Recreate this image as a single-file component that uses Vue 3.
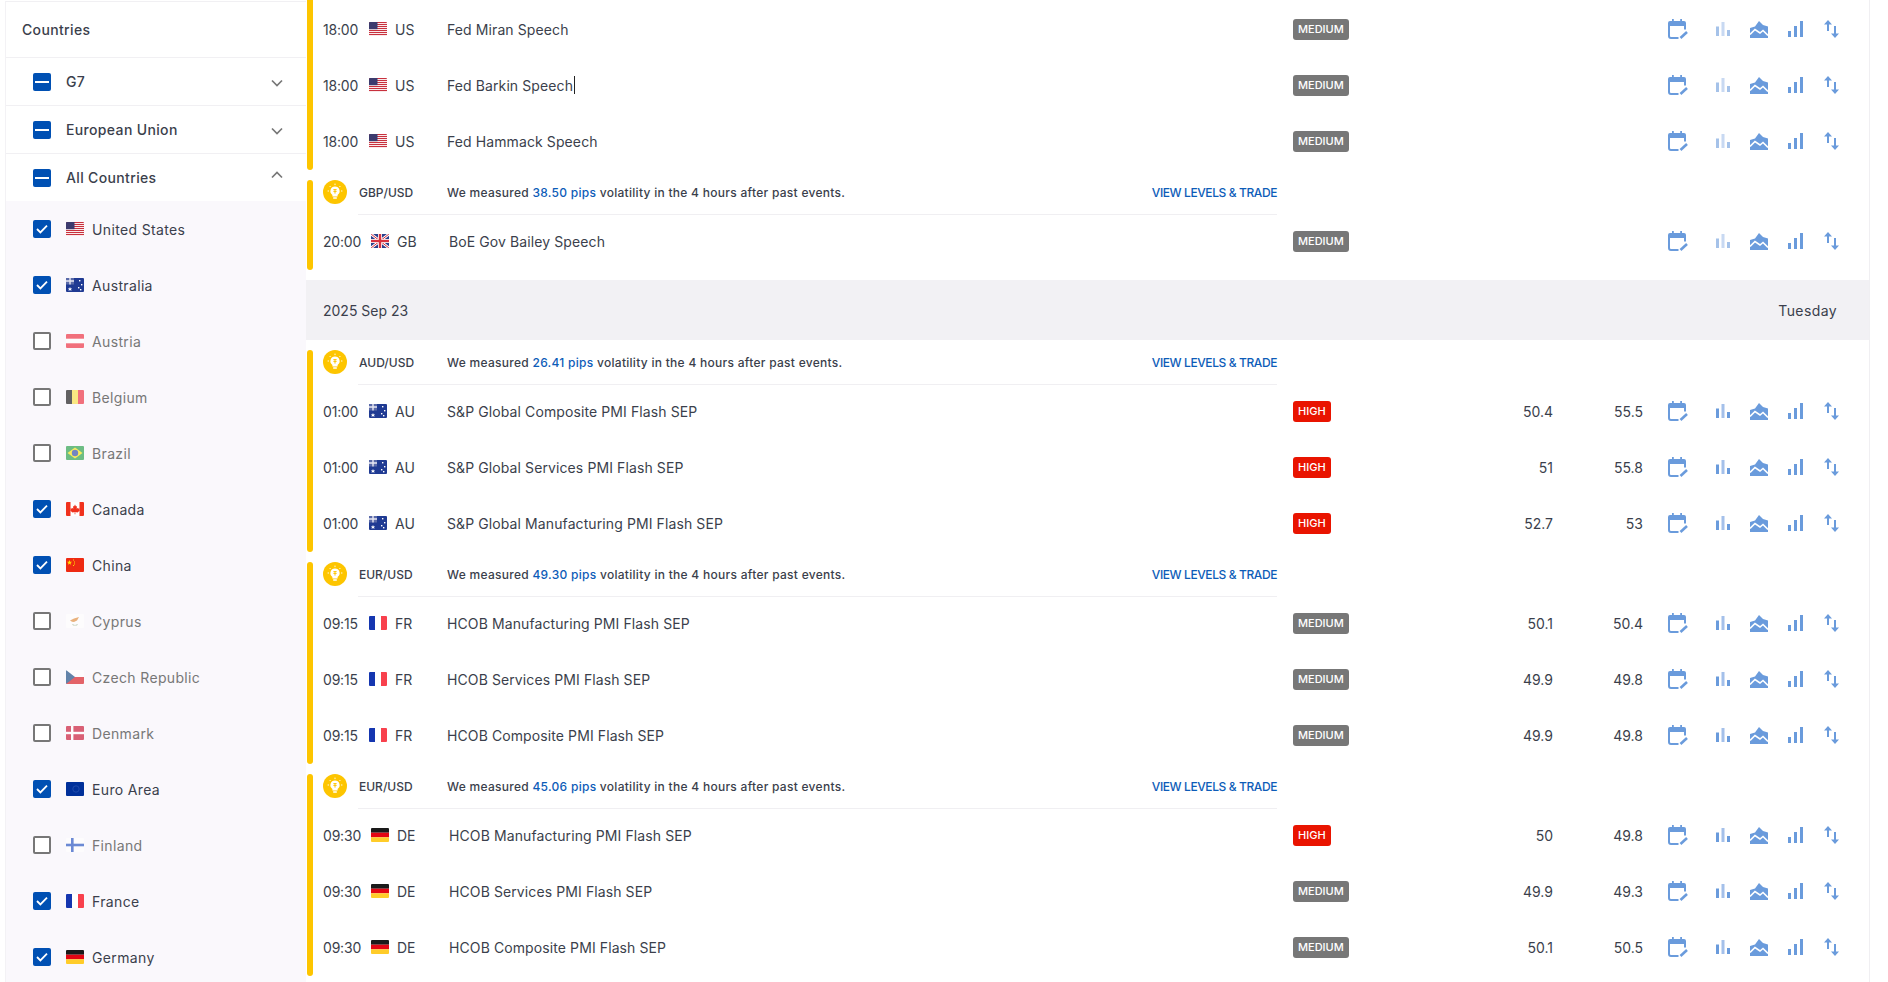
<script setup>
import { h } from 'vue'

const r = (x, y, width, height, fill) => h('rect', { x, y, width, height, fill })
const p = (d, fill, extra = {}) => h('path', { d, fill, ...extra })
const flagShapes = {
  US: () => [r(0, 0, 18, 14, '#fff'), ...[0, 2, 4, 6, 8, 10, 12].map((y) => r(0, y, 18, 1.1, '#c8313e')), r(0, 0, 8.5, 7.2, '#3c3b6e')],
  AU: () => [r(0, 0, 18, 14, '#1f3a93'), r(0, 0, 8, 6.5, '#5a6aa8'), p('M0 3h8M4 0v6.5', 'none', { stroke: '#e8e8f2', 'stroke-width': 1.4 }), p('M4 9l.7 1.5h1.5l-1.2 1 .5 1.5-1.5-.9-1.5.9.5-1.5-1.2-1h1.5z', '#fff'), r(13, 2, 1.4, 1.4, '#fff'), r(15, 6, 1.4, 1.4, '#fff'), r(12, 9, 1.4, 1.4, '#fff'), r(14, 11, 1.4, 1.4, '#fff')],
  AT: () => [r(0, 0, 18, 14, '#fff'), r(0, 0, 18, 4.7, '#ed2939'), r(0, 9.3, 18, 4.7, '#ed2939')],
  BE: () => [r(0, 0, 6, 14, '#111'), r(6, 0, 6, 14, '#fae042'), r(12, 0, 6, 14, '#ed2939')],
  BR: () => [r(0, 0, 18, 14, '#229e45'), p('M9 1.5L16.5 7 9 12.5 1.5 7z', '#f8e509'), h('circle', { cx: 9, cy: 7, r: 3.2, fill: '#2b49a3' })],
  CA: () => [r(0, 0, 18, 14, '#fff'), r(0, 0, 4.5, 14, '#f0311d'), r(13.5, 0, 4.5, 14, '#f0311d'), p('M9 2.5l1 2 1-.4-.3 2.6 1.4-1 .4 1 1.3-.2-.5 1.6.6.5-2.4 1.8-2.2-.3.1 2.2h-.8l.1-2.2-2.2.3-2.4-1.8.6-.5-.5-1.6 1.3.2.4-1 1.4 1-.3-2.6 1 .4z', '#f0311d')],
  CN: () => [r(0, 0, 18, 14, '#ee2a12'), p('M3.5 2l.7 1.7 1.8.1-1.4 1.1.5 1.8-1.6-1-1.6 1 .5-1.8L1 3.8l1.8-.1z', '#ffde00'), r(7, 1.5, 1, 1, '#ffde00'), r(8, 3.5, 1, 1, '#ffde00'), r(8, 5.5, 1, 1, '#ffde00'), r(7, 7, 1, 1, '#ffde00')],
  CY: () => [r(0, 0, 18, 14, '#fff'), p('M4 6.5l4-2 5-1.5-2 3.5-3 1.5-2-.2z', '#e08c3a'), p('M6 10l3 1 3-1-1 1.5H7z', '#9db58f')],
  CZ: () => [r(0, 0, 18, 7, '#fff'), r(0, 7, 18, 7, '#d7141a'), p('M0 0L9 7 0 14z', '#11457e')],
  DK: () => [r(0, 0, 18, 14, '#c8102e'), r(5, 0, 2.4, 14, '#fff'), r(0, 5.8, 18, 2.4, '#fff')],
  EU: () => [r(0, 0, 18, 14, '#00309a'), h('circle', { cx: 10, cy: 7, r: 3.2, fill: 'none', stroke: '#1f4aab', 'stroke-width': 1 })],
  FI: () => [r(0, 0, 18, 14, '#fff'), r(5, 0, 2.6, 14, '#1f4fbf'), r(0, 5.7, 18, 2.6, '#1f4fbf')],
  FR: () => [r(0, 0, 6, 14, '#1536b0'), r(6, 0, 6, 14, '#fff'), r(12, 0, 6, 14, '#f8414d')],
  DE: () => [r(0, 0, 18, 4.7, '#1a1a1a'), r(0, 4.7, 18, 4.6, '#e30613'), r(0, 9.3, 18, 4.7, '#ffcc29')],
  GB: () => [r(0, 0, 18, 14, '#2b3f8c'), p('M0 0L18 14M18 0L0 14', 'none', { stroke: '#fff', 'stroke-width': 2.6 }), p('M0 0L18 14M18 0L0 14', 'none', { stroke: '#d8313f', 'stroke-width': 1 }), r(7, 0, 4, 14, '#fff'), r(0, 5, 18, 4, '#fff'), r(7.8, 0, 2.4, 14, '#d8313f'), r(0, 5.8, 18, 2.4, '#d8313f')],
}
const Flag = (props) =>
  h('svg', { width: 18, height: 14, viewBox: '0 0 18 14', style: 'border-radius:1px;flex:none;display:block' }, flagShapes[props.code]())
Flag.props = ['code']

const groups = [
  { label: 'G7', down: true },
  { label: 'European Union', down: true },
  { label: 'All Countries', down: false },
]
const countries = [
  ['United States', 'US', true], ['Australia', 'AU', true], ['Austria', 'AT', false],
  ['Belgium', 'BE', false], ['Brazil', 'BR', false], ['Canada', 'CA', true], ['China', 'CN', true],
  ['Cyprus', 'CY', false], ['Czech Republic', 'CZ', false], ['Denmark', 'DK', false],
  ['Euro Area', 'EU', true], ['Finland', 'FI', false], ['France', 'FR', true], ['Germany', 'DE', true],
].map(([name, code, on]) => ({ name, code, on }))

const ev = (time, code, title, level, actual = '', forecast = '', caret = false) => ({ time, code, title, level, actual, forecast, caret })
const firstBlock = [
  { events: [ev('18:00', 'US', 'Fed Miran Speech', 'MEDIUM'), ev('18:00', 'US', 'Fed Barkin Speech', 'MEDIUM', '', '', true), ev('18:00', 'US', 'Fed Hammack Speech', 'MEDIUM')] },
  { pair: 'GBP/USD', pips: '38.50', events: [ev('20:00', 'GB', 'BoE Gov Bailey Speech', 'MEDIUM')] },
]
const secondBlock = [
  { pair: 'AUD/USD', pips: '26.41', events: [ev('01:00', 'AU', 'S&P Global Composite PMI Flash SEP', 'HIGH', '50.4', '55.5'), ev('01:00', 'AU', 'S&P Global Services PMI Flash SEP', 'HIGH', '51', '55.8'), ev('01:00', 'AU', 'S&P Global Manufacturing PMI Flash SEP', 'HIGH', '52.7', '53')] },
  { pair: 'EUR/USD', pips: '49.30', events: [ev('09:15', 'FR', 'HCOB Manufacturing PMI Flash SEP', 'MEDIUM', '50.1', '50.4'), ev('09:15', 'FR', 'HCOB Services PMI Flash SEP', 'MEDIUM', '49.9', '49.8'), ev('09:15', 'FR', 'HCOB Composite PMI Flash SEP', 'MEDIUM', '49.9', '49.8')] },
  { pair: 'EUR/USD', pips: '45.06', events: [ev('09:30', 'DE', 'HCOB Manufacturing PMI Flash SEP', 'HIGH', '50', '49.8'), ev('09:30', 'DE', 'HCOB Services PMI Flash SEP', 'MEDIUM', '49.9', '49.3'), ev('09:30', 'DE', 'HCOB Composite PMI Flash SEP', 'MEDIUM', '50.1', '50.5')] },
]
const blocks = [
  { groups: firstBlock },
  { date: '2025 Sep 23', day: 'Tuesday', groups: secondBlock },
]
</script>

<template>
  <div class="page">
    <aside class="side">
      <div class="side-title">Countries</div>
      <div v-for="g in groups" :key="g.label" class="side-group">
        <span class="box on"><span class="dash"></span></span>
        <span class="group-label">{{ g.label }}</span>
        <svg class="chev" :class="{ up: !g.down }" width="12" height="8" viewBox="0 0 12 8">
          <path d="M1 1.5l5 5 5-5" fill="none" stroke="#777" stroke-width="1.7" />
        </svg>
      </div>
      <div class="side-list">
        <div v-for="c in countries" :key="c.code" class="side-item" :class="{ off: !c.on }">
          <span class="box" :class="{ on: c.on }">
            <svg v-if="c.on" width="12" height="10" viewBox="0 0 12 10">
              <path d="M1 5l3.400 3.400L11 1.600" fill="none" stroke="#fff" stroke-width="1.8" />
            </svg>
          </span>
          <Flag class="side-flag" :code="c.code" />
          <span class="item-label">{{ c.name }}</span>
        </div>
      </div>
    </aside>

    <main class="main">
      <template v-for="(block, bi) in blocks" :key="bi">
        <div v-if="block.date" class="date-band">
          <span>{{ block.date }}</span>
          <span class="day">{{ block.day }}</span>
        </div>
        <section v-for="(grp, gi) in block.groups" :key="gi" class="group">
          <div class="bar"></div>
          <div class="group-body">
            <div v-if="grp.pair" class="insight">
              <svg class="bulb" width="24" height="24" viewBox="0 0 24 24">
                <circle cx="12" cy="12" r="12" fill="#fdc500" />
                <path d="M12 6.500a4.600 4.600 0 0 0-2.600 8.400v1.600h5.200v-1.600A4.600 4.600 0 0 0 12 6.500z" fill="#fff" />
                <rect x="10" y="17.200" width="4" height="1.500" rx=".7" fill="#fff" />
                <path d="M12 3.600v1.500M6.600 6l1 1M17.400 6l-1 1M4.600 11h1.400M18 11h1.400" stroke="#fff" stroke-width=".9" />
                <path d="M10.400 9.600h3.200M10.400 11.400h3.200M12 9.600v4" stroke="#fdc500" stroke-width="1" fill="none" />
              </svg>
              <div class="insight-line">
                <span class="pair">{{ grp.pair }}</span>
                <span class="msg">We measured <span class="pips">{{ grp.pips }} pips</span> volatility in the 4 hours after past events.</span>
                <span class="trade">VIEW LEVELS &amp; TRADE</span>
              </div>
            </div>
            <div v-for="(e, ei) in grp.events" :key="ei" class="event">
              <span class="time" :class="{ wide: e.code === 'DE' || e.code === 'GB' }">{{ e.time }}</span>
              <Flag :code="e.code" />
              <span class="code">{{ e.code }}</span>
              <span class="title">{{ e.title }}<span v-if="e.caret" class="caret"></span></span>
              <span class="badge-col"><span class="badge" :class="e.level === 'HIGH' ? 'high' : 'medium'">{{ e.level }}</span></span>
              <span class="num actual">{{ e.actual }}</span>
              <span class="num forecast">{{ e.forecast }}</span>
              <span class="icons">
                <svg class="i-cal" width="20" height="20" viewBox="0 0 20 20">
                  <path d="M1 5.500V17a2 2 0 0 0 2 2h7.500M17 7v3.500" fill="none" stroke="#6a9bdc" stroke-width="2" />
                  <path d="M0 4a2 2 0 0 1 2-2h2V0h1.800v2h6.400V0H14v2h2a2 2 0 0 1 2 2v3H0z" fill="#6a9bdc" />
                  <path d="M12.500 19l6.500-6" fill="none" stroke="#6a9bdc" stroke-width="2.600" />
                </svg>
                <svg class="i-bars" :class="{ faded: !e.actual }" width="14" height="14" viewBox="0 0 14 14">
                  <rect x="0" y="4.500" width="3" height="9.500" fill="#6a9bdc" />
                  <rect x="5.500" y="0" width="3" height="14" fill="#a4c0ea" />
                  <rect x="11" y="8" width="3" height="6" fill="#6a9bdc" />
                </svg>
                <svg class="i-area" width="18" height="17" viewBox="0 0 18 17">
                  <path d="M0 7l5-1.500L9 0l4 4 5 1.500V17H0z" fill="#6a9bdc" />
                  <path d="M0 13.500l5-5 5 3.500 3-2.500 5 5" fill="none" stroke="#fff" stroke-width="1.6" />
                </svg>
                <svg class="i-steps" width="15" height="16" viewBox="0 0 15 16">
                  <rect x="0" y="10" width="3" height="6" fill="#6a9bdc" />
                  <rect x="6" y="5" width="3" height="11" fill="#6a9bdc" />
                  <rect x="12" y="0" width="3" height="16" fill="#6a9bdc" />
                </svg>
                <svg class="i-arrows" width="15" height="18" viewBox="0 0 15 18">
                  <path d="M4 0L8 4.500H5V11H3V4.500H0z" fill="#6a9bdc" />
                  <path d="M11 18L7 13.500H10V6h2v7.500h3z" fill="#6a9bdc" />
                </svg>
              </span>
            </div>
          </div>
        </section>
      </template>
    </main>
  </div>
</template>

<style>
html, body { margin: 0; background: #fff; overflow: hidden; }
</style>

<style scoped>
.page {
  display: flex;
  height: 982px;
  overflow: hidden;
  padding-left: 5px;
  font-family: Inter, "Liberation Sans", sans-serif;
  font-size: 14px;
  color: #3b3f4c;
  box-sizing: border-box;
}
.side {
  width: 301px;
  flex: none;
  border-top: 1px solid #f1f0f3;
  border-left: 1px solid #f3f2f5;
  margin-top: 1px;
  box-sizing: border-box;
  letter-spacing: 0.35px;
}
.side-title {
  height: 56px;
  display: flex;
  align-items: center;
  padding-left: 16px;
  font-weight: 500;
  border-bottom: 1px solid #f1f0f3;
  box-sizing: border-box;
}
.side-group {
  height: 48px;
  display: flex;
  align-items: center;
  padding-left: 27px;
  padding-right: 23px;
  font-weight: 500;
  border-bottom: 1px solid #f1f0f3;
  box-sizing: border-box;
}
.side-group:nth-of-type(4) { border-bottom: none; height: 47px; }
.group-label { margin-left: 15px; flex: 1; }
.chev { margin-top: 3px; }
.chev.up { transform: rotate(180deg); margin-top: -6px; }
.box {
  width: 18px;
  height: 18px;
  flex: none;
  box-sizing: border-box;
  border: 2px solid #777;
  border-radius: 2px;
  background: #fff;
  display: flex;
  align-items: center;
  justify-content: center;
}
.box.on { border: none; background: #0050b3; }
.dash { width: 14px; height: 2px; background: #fff; }
.side-list { background: #faf8fc; }
.side-item {
  height: 56px;
  display: flex;
  align-items: center;
  padding-left: 27px;
}
.side-flag { margin-left: 15px; }
.side-item.off .side-flag { opacity: 0.65; }
.item-label { margin-left: 8px; }
.side-item.off .item-label { color: #777; }
.main {
  width: 1564px;
  flex: none;
  box-sizing: border-box;
  border-right: 1px solid #f0eff2;
  display: flex;
  flex-direction: column;
  gap: 10px;
}
.date-band {
  height: 60px;
  flex: none;
  background: #f2f1f4;
  display: flex;
  align-items: center;
  justify-content: space-between;
  padding: 0 32px 0 17px;
}
.day { letter-spacing: 0.4px; }
.group { display: flex; flex: none; padding-left: 1px; }
.group:first-of-type .group-body { padding-top: 2px; }
.group:first-of-type .bar { margin-top: -3px; }
.bar { width: 6px; flex: none; background: #fdc500; border-radius: 3px; }
.group-body { flex: 1; min-width: 0; }
.insight {
  height: 35px;
  margin-bottom: -1px;
  display: flex;
  align-items: flex-start;
  padding-left: 10px;
}
.bulb { flex: none; }
.insight-line {
  margin-left: 11px;
  width: 919px;
  height: 35px;
  display: flex;
  align-items: center;
  border-bottom: 1px solid #f0eff2;
  box-sizing: border-box;
  font-size: 12px;
  font-weight: 500;
  padding-bottom: 10px;
}
.pair { width: 88px; margin-left: 1px; flex: none; }
.msg { flex: 1; letter-spacing: 0.28px; }
.pips { color: #0d5cb8; }
.trade { color: #0d5cb8; font-weight: 500; letter-spacing: -0.4px; }
.event {
  height: 56px;
  display: flex;
  align-items: center;
  padding-left: 10px;
  padding-bottom: 2px;
  box-sizing: border-box;
}
.time { width: 46px; flex: none; letter-spacing: -0.2px; }
.time.wide { width: 48px; }
.code { margin-left: 8px; width: 52px; flex: none; }
.title { flex: 1; min-width: 0; display: flex; align-items: center; letter-spacing: 0.1px; }
.caret { width: 1px; height: 18px; background: #222; margin-left: 1px; }
.badge-col { width: 184px; flex: none; display: flex; }
.badge {
  height: 21px;
  display: inline-flex;
  align-items: center;
  padding: 0 5px;
  border-radius: 3px;
  color: #fff;
  font-size: 11px;
  font-weight: 500;
}
.badge.medium { background: #777; }
.badge.high { background: #e91400; }
.num { flex: none; text-align: right; }
.actual { width: 76px; }
.forecast { width: 90px; }
.icons {
  flex: none;
  width: 226px;
  padding-left: 25px;
  box-sizing: border-box;
  display: flex;
  align-items: center;
}
.i-bars { margin-left: 28px; }
.i-bars.faded { opacity: 0.6; }
.i-area { margin-left: 20px; }
.i-steps { margin-left: 20px; }
.i-arrows { margin-left: 21px; }
</style>
